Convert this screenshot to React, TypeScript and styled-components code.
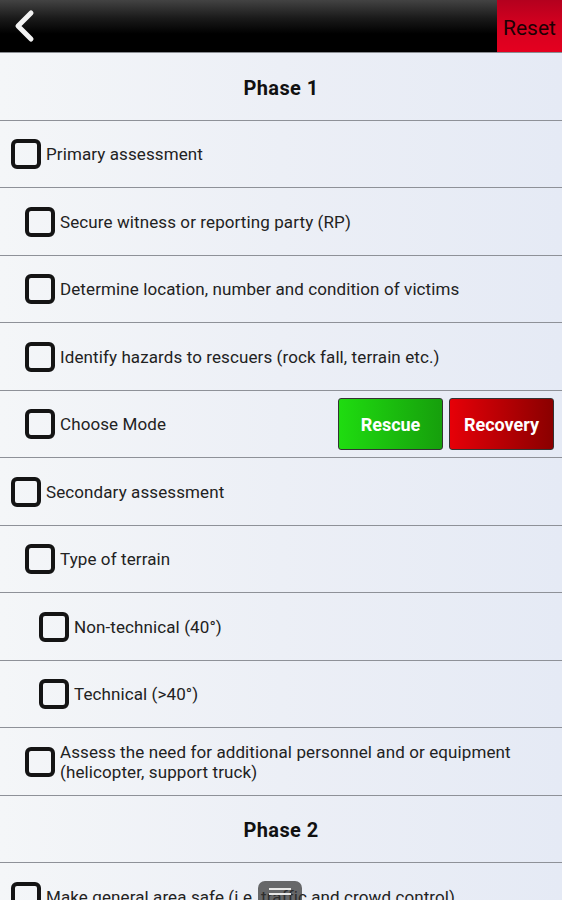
import styled, { createGlobalStyle } from "styled-components";

const GlobalStyle = createGlobalStyle`
  html, body {
    margin: 0;
    padding: 0;
    overflow: hidden;
    background: #f0f3f7;
  }
  * { box-sizing: border-box; }
`;

type Item =
  | { kind: "phase"; label: string }
  | { kind: "check"; label: string; level: number; mode?: boolean };

const items: Item[] = [
  { kind: "phase", label: "Phase 1" },
  { kind: "check", label: "Primary assessment", level: 0 },
  { kind: "check", label: "Secure witness or reporting party (RP)", level: 1 },
  { kind: "check", label: "Determine location, number and condition of victims", level: 1 },
  { kind: "check", label: "Identify hazards to rescuers (rock fall, terrain etc.)", level: 1 },
  { kind: "check", label: "Choose Mode", level: 1, mode: true },
  { kind: "check", label: "Secondary assessment", level: 0 },
  { kind: "check", label: "Type of terrain", level: 1 },
  { kind: "check", label: "Non-technical (40°)", level: 2 },
  { kind: "check", label: "Technical (>40°)", level: 2 },
  {
    kind: "check",
    label: "Assess the need for additional personnel and or equipment (helicopter, support truck)",
    level: 1,
  },
  { kind: "phase", label: "Phase 2" },
  { kind: "check", label: "Make general area safe (i.e. traffic and crowd control)", level: 0 },
  { kind: "check", label: "Establish command post", level: 0 },
];

function App() {
  return (
    <>
      <GlobalStyle />
      <Screen>
        <TopBar>
          <BackButton aria-label="Back">
            <svg width="24" height="34" viewBox="0 0 24 34">
              <path
                d="M19 4 L6 17 L19 30"
                fill="none"
                stroke="#f2f2f2"
                strokeWidth="5"
                strokeLinecap="round"
                strokeLinejoin="round"
              />
            </svg>
          </BackButton>
          <ResetButton>Reset</ResetButton>
        </TopBar>
        <List>
          {items.map((item, i) =>
            item.kind === "phase" ? (
              <PhaseRow key={i}>{item.label}</PhaseRow>
            ) : (
              <CheckRow key={i} level={item.level}>
                <Box />
                <Label>{item.label}</Label>
                {item.mode && (
                  <ModeButtons>
                    <ModeButton variant="rescue">Rescue</ModeButton>
                    <ModeButton variant="recovery">Recovery</ModeButton>
                  </ModeButtons>
                )}
              </CheckRow>
            )
          )}
        </List>
        <MenuKey aria-label="Menu">
          <span />
          <span />
        </MenuKey>
      </Screen>
    </>
  );
}

const Screen = styled.div`
  position: relative;
  width: 562px;
  height: 900px;
  overflow: hidden;
  font-family: Roboto, "Noto Sans", sans-serif;
  background: linear-gradient(90deg, #f4f6f8 0%, #eceff6 50%, #e5eaf5 100%);
`;

const TopBar = styled.header`
  height: 53px;
  display: flex;
  justify-content: space-between;
  align-items: stretch;
  background: linear-gradient(180deg, #434343 0%, #1a1a1a 35%, #000 65%, #000 100%);
  border-bottom: 1px solid #8a8d92;
`;

const BackButton = styled.button`
  width: 52px;
  padding: 0 0 0 12px;
  border: none;
  background: transparent;
  display: flex;
  align-items: center;
`;

const ResetButton = styled.button`
  width: 65px;
  border: none;
  padding: 4px 0 0;
  background: linear-gradient(180deg, #b4001e 0%, #d6001f 50%, #e4001f 100%);
  color: #1c0004;
  font-family: Roboto, sans-serif;
  font-size: 21px;
  text-align: center;
`;

const List = styled.div`
  display: flex;
  flex-direction: column;
`;

const PhaseRow = styled.div`
  height: 67.5px;
  display: flex;
  align-items: center;
  justify-content: center;
  border-bottom: 1px solid #8e9198;
  font-size: 20px;
  letter-spacing: 0.4px;
  font-weight: 700;
  color: #111;
  padding-top: 3px;
`;

const CheckRow = styled.div<{ level: number }>`
  min-height: 67.5px;
  display: flex;
  align-items: center;
  gap: 5px;
  padding: 1px 8px 0 ${({ level }) => 11 + level * 14}px;
  border-bottom: 1px solid #8e9198;
`;

const Box = styled.span`
  flex: none;
  width: 30px;
  height: 30px;
  border: 4px solid #141414;
  border-radius: 6px;
`;

const Label = styled.span`
  flex: 1;
  font-size: 17px;
  line-height: 20px;
  color: #222;
  letter-spacing: 0.1px;
`;

const ModeButtons = styled.div`
  display: flex;
  gap: 6px;
`;

const ModeButton = styled.button<{ variant: "rescue" | "recovery" }>`
  width: 105px;
  height: 52px;
  border: 1px solid #333;
  border-radius: 3px;
  color: #fff;
  font-family: Roboto, sans-serif;
  font-weight: 700;
  font-size: 18px;
  background: ${({ variant }) =>
    variant === "rescue"
      ? "linear-gradient(90deg, #1fdc10 0%, #169f0c 100%)"
      : "linear-gradient(90deg, #e60008 0%, #8a0000 100%)"};
`;

const MenuKey = styled.button`
  position: absolute;
  left: 258px;
  top: 881px;
  width: 44px;
  height: 32px;
  border: none;
  border-radius: 7px;
  background: rgba(50, 50, 50, 0.72);
  display: flex;
  flex-direction: column;
  align-items: center;
  padding-top: 7px;
  gap: 3px;

  span {
    width: 22px;
    height: 2px;
    background: #e8e8e8;
  }
`;

export default App;
